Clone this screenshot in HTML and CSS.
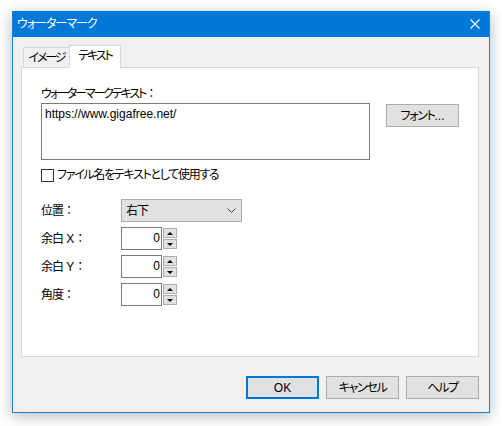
FILE: index.html
```html
<!DOCTYPE html>
<html lang="ja">
<head>
<meta charset="utf-8">
<title>ウォーターマーク</title>
<link rel="stylesheet" href="styles.css">
</head>
<body>
<div class="window">
  <div class="titlebar">
    <span class="title">ウォーターマーク</span>
    <svg class="close" width="10" height="10" viewBox="0 0 10 10"><path d="M0.5 0.5 L9.5 9.5 M9.5 0.5 L0.5 9.5" stroke="#fff" stroke-width="1.1" fill="none"/></svg>
  </div>
  <div class="content">
    <div class="tabs">
      <div class="tab"><span class="kana narrow">イメージ</span></div>
      <div class="tab active"><span class="kana narrow">テキスト</span></div>
    </div>
    <div class="panel">
      <div class="label"><span class="kana narrow">ウォーターマークテキスト</span><span class="colon">：</span></div>
      <div class="text-row">
        <div class="textarea">https://www.gigafree.net/</div>
        <div class="btn font-btn"><span class="kana">フォント</span>...</div>
      </div>
      <div class="check-row">
        <span class="checkbox"></span>
        <span class="check-label kana">ファイル名をテキストとして使用する</span>
      </div>
      <div class="field-row first">
        <span class="field-label"><span class="kanji">位置</span><span class="colon">：</span></span>
        <div class="combo">
          <span class="kanji">右下</span>
          <svg class="chevron" width="9" height="5" viewBox="0 0 9 5"><path d="M0.5 0.5 L4.5 4.5 L8.5 0.5" stroke="#444" stroke-width="1" fill="none"/></svg>
        </div>
      </div>
      <div class="field-row">
        <span class="field-label"><span class="kanji">余白</span> X<span class="colon">：</span></span>
        <div class="spin">
          <div class="spin-edit">0</div>
          <div class="spin-btns">
            <div class="spin-btn"><span class="arrow-up"></span></div>
            <div class="spin-btn"><span class="arrow-down"></span></div>
          </div>
        </div>
      </div>
      <div class="field-row">
        <span class="field-label"><span class="kanji">余白</span> Y<span class="colon">：</span></span>
        <div class="spin">
          <div class="spin-edit">0</div>
          <div class="spin-btns">
            <div class="spin-btn"><span class="arrow-up"></span></div>
            <div class="spin-btn"><span class="arrow-down"></span></div>
          </div>
        </div>
      </div>
      <div class="field-row">
        <span class="field-label"><span class="kanji">角度</span><span class="colon">：</span></span>
        <div class="spin">
          <div class="spin-edit">0</div>
          <div class="spin-btns">
            <div class="spin-btn"><span class="arrow-up"></span></div>
            <div class="spin-btn"><span class="arrow-down"></span></div>
          </div>
        </div>
      </div>
    </div>
    <div class="buttons">
      <div class="btn dlg-btn default">OK</div>
      <div class="btn dlg-btn"><span class="kana">キャンセル</span></div>
      <div class="btn dlg-btn"><span class="kana">ヘルプ</span></div>
    </div>
  </div>
</div>
</body>
</html>
```

FILE: styles.css
```css
* { box-sizing: border-box; }
html, body { margin: 0; padding: 0; }
body {
  background: #ffffff;
  font-family: "Liberation Sans", "Noto Sans CJK JP", sans-serif;
  font-size: 12px;
  color: #000;
  width: 502px;
  height: 426px;
  overflow: hidden;
}
.kana { font-feature-settings: "palt"; letter-spacing: -1.3px; }
.kana.narrow { letter-spacing: -2.1px; }
.kanji { letter-spacing: -1px; }
.colon { font-feature-settings: normal; letter-spacing: 0; }
.window {
  margin: 11px 0 0 12px;
  width: 478px;
  height: 402px;
  border: 1px solid #1883d7;
  border-top: none;
  background: #f0f0f0;
  box-shadow: 0 3px 14px rgba(0,0,0,0.28);
  display: flex;
  flex-direction: column;
}
.titlebar {
  height: 26px;
  background: #0078d7;
  display: flex;
  align-items: center;
  justify-content: space-between;
  padding: 0 9px 0 4px;
  color: #fff;
  flex: none;
}
.title { font-size: 12px; line-height: 16px; font-feature-settings: "palt"; letter-spacing: -1px; }
.close { display: block; }
.content {
  flex: 1;
  padding: 8px 10px 0 8px;
  display: flex;
  flex-direction: column;
}
.tabs {
  height: 22px;
  display: flex;
  align-items: flex-end;
  padding-left: 2px;
}
.tab {
  height: 20px;
  width: 47px;
  border: 1px solid #d9d9d9;
  border-bottom: none;
  background: #f0f0f0;
  display: flex;
  align-items: center;
  justify-content: center;
  line-height: 16px;
  padding-top: 1px;
}
.tab.active {
  width: 52px;
  height: 23px;
  margin-left: -1px;
  margin-bottom: -1px;
  background: #fff;
  position: relative;
  z-index: 1;
  padding-top: 0;
  padding-bottom: 2px;
}
.panel {
  height: 290px;
  background: #fff;
  border: 1px solid #d9d9d9;
  padding: 18px 0 0 19px;
}
.label { line-height: 16px; height: 16px; }
.text-row {
  margin-top: 1px;
  display: flex;
  align-items: flex-start;
}
.textarea {
  width: 329px;
  height: 57px;
  border: 1px solid #7a7a7a;
  padding: 2px 3px;
  line-height: 16px;
  background: #fff;
}
.btn {
  background: #e1e1e1;
  border: 1px solid #adadad;
  display: flex;
  align-items: center;
  justify-content: center;
  line-height: 16px;
}
.font-btn {
  width: 73px;
  height: 23px;
  margin: 1px 0 0 16px;
}
.check-row {
  margin-top: 7px;
  height: 16px;
  display: flex;
  align-items: center;
}
.checkbox {
  width: 13px;
  height: 13px;
  border: 1px solid #333;
  background: #fff;
  margin-right: 3px;
}
.check-label { line-height: 16px; }
.field-row {
  display: flex;
  align-items: center;
  height: 23px;
  margin-top: 5px;
}
.field-row.first { margin-top: 16px; }
.field-label { width: 80px; line-height: 16px; }
.combo {
  width: 121px;
  height: 23px;
  background: #e1e1e1;
  border: 1px solid #adadad;
  display: flex;
  align-items: center;
  justify-content: space-between;
  padding: 0 5px 0 4px;
  line-height: 16px;
}
.chevron { display: block; }
.spin { display: flex; align-items: flex-start; height: 23px; }
.spin-edit {
  width: 41px;
  height: 23px;
  border: 1px solid #7a7a7a;
  background: #fff;
  text-align: right;
  padding-right: 1px;
  line-height: 20px;
}
.spin-btns {
  margin-left: 1px;
  padding-top: 1px;
  display: flex;
  flex-direction: column;
  gap: 1px;
}
.spin-btn {
  width: 14px;
  height: 10px;
  background: #e1e1e1;
  border: 1px solid #adadad;
  display: flex;
  align-items: center;
  justify-content: center;
}
.arrow-up, .arrow-down {
  width: 0;
  height: 0;
  border-left: 3px solid transparent;
  border-right: 3px solid transparent;
}
.arrow-up { border-bottom: 3px solid #000; }
.arrow-down { border-top: 3px solid #000; }
.buttons {
  margin-top: 19px;
  display: flex;
  justify-content: flex-end;
  gap: 7px;
}
.dlg-btn { width: 73px; height: 23px; }
.dlg-btn.default { border: 2px solid #0078d7; }
```
